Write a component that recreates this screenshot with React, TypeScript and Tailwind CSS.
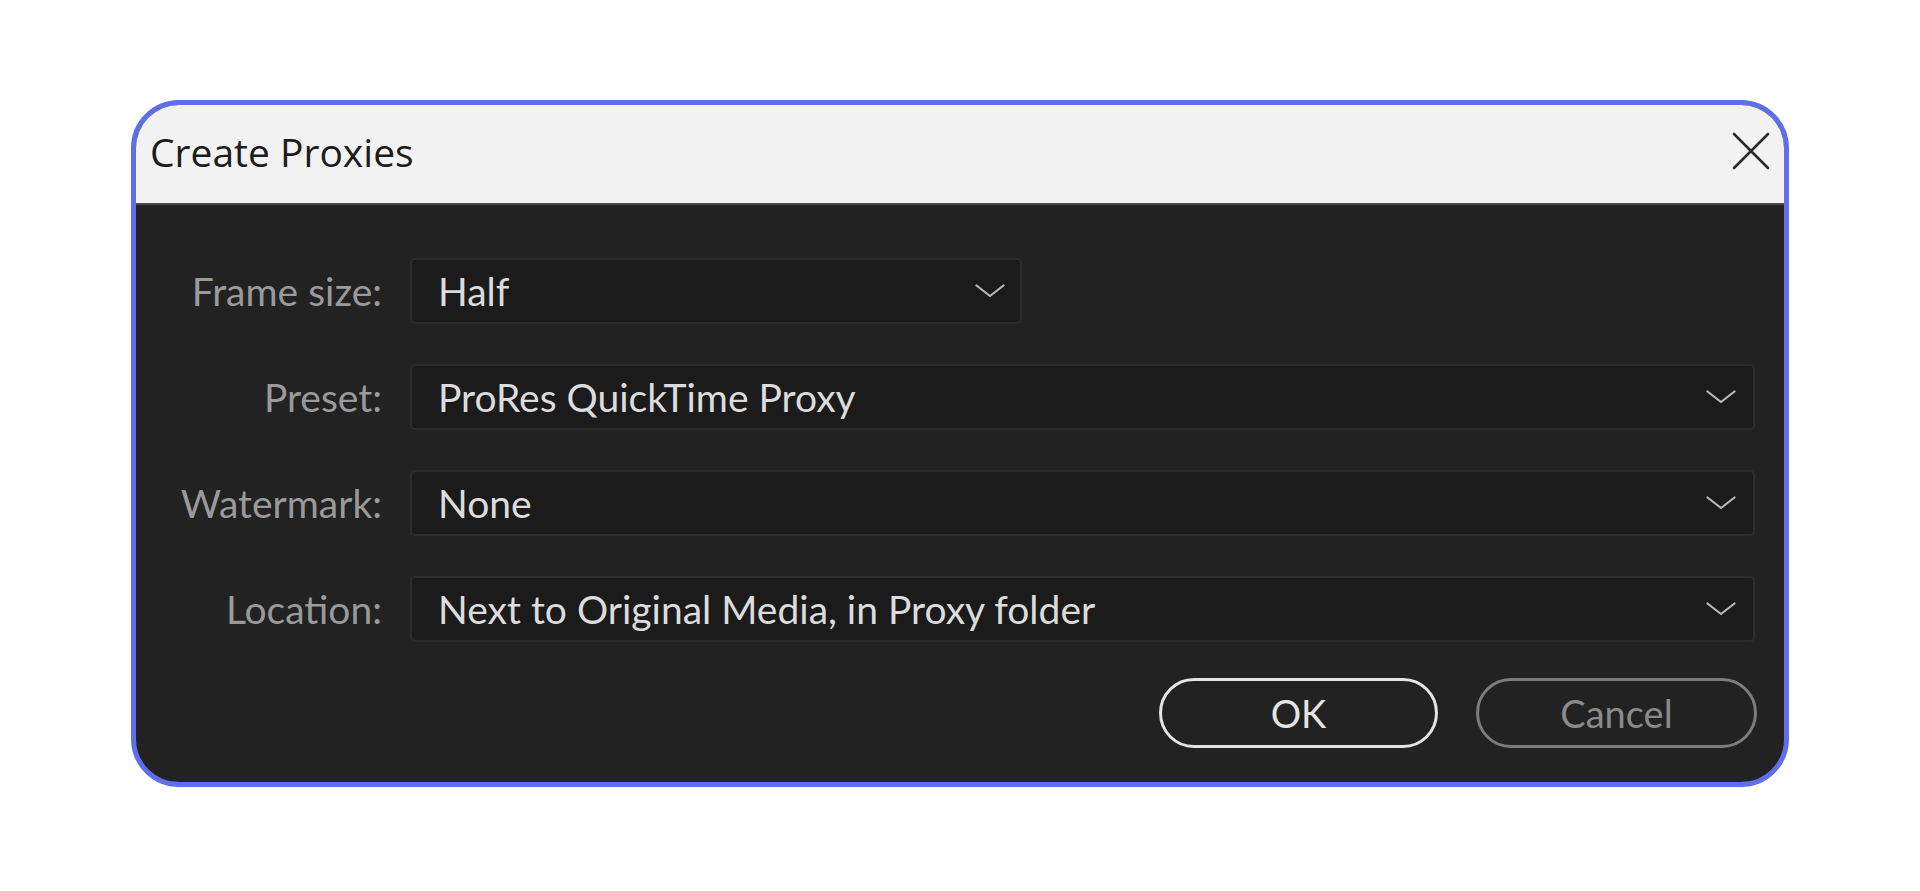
const rows = [
  { label: "Frame size:", value: "Half", narrow: true },
  { label: "Preset:", value: "ProRes QuickTime Proxy", narrow: false },
  { label: "Watermark:", value: "None", narrow: false },
  { label: "Location:", value: "Next to Original Media, in Proxy folder", narrow: false },
];

const Chevron = () => (
  <svg width="30" height="14" viewBox="0 0 30 14" fill="none" className="shrink-0">
    <path d="M1.5 1.5 L15 12 L28.5 1.5" stroke="#b8b8b8" strokeWidth="2.2" strokeLinecap="round" strokeLinejoin="round" />
  </svg>
);

export default function App() {
  return (
    <div className="min-h-screen w-full bg-white flex justify-center pt-[100px] font-['Lato',sans-serif]">
      <div className="w-[1658px] h-[687px] border-[5px] border-[#5f6fec] rounded-[48px] overflow-hidden flex flex-col bg-[#222222]">
        {/* Title bar */}
        <div className="h-[100px] shrink-0 bg-[#f3f2f2] flex items-center justify-between pl-[14px] pr-[13px] border-b-2 border-[#4a4a4a]">
          <span className="text-[39px] text-[#1c1c1c] font-['Open_Sans',sans-serif] leading-none -mt-[6px]">
            Create Proxies
          </span>
          <svg width="40" height="40" viewBox="0 0 40 40" className="-mt-[6px]">
            <path d="M3 3 L37 37 M37 3 L3 37" stroke="#2b2b2b" strokeWidth="2.6" strokeLinecap="round" />
          </svg>
        </div>

        {/* Body */}
        <div className="flex-1 flex flex-col pt-[53px] pr-[29px]">
          <div className="grid grid-cols-[246px_1fr] gap-x-[28px] gap-y-[40px]">
            {rows.map((r) => (
              <div key={r.label} className="contents">
                <div className="h-[66px] flex items-center justify-end text-[39px] text-[#9a9a9a] leading-none">
                  {r.label}
                </div>
                <div
                  className={
                    r.narrow
                      ? "h-[66px] w-[612px] flex items-center justify-between bg-[#1b1b1b] border-2 border-[#2d2d2d] rounded-[5px] pl-[26px] pr-[15px]"
                      : "h-[66px] w-full flex items-center justify-between bg-[#1b1b1b] border-2 border-[#2d2d2d] rounded-[5px] pl-[26px] pr-[17px]"
                  }
                >
                  <span className="text-[39px] text-[#dcdcdc] leading-none whitespace-pre">{r.value}</span>
                  <Chevron />
                </div>
              </div>
            ))}
          </div>

          {/* Buttons */}
          <div className="flex justify-end gap-[38px] mt-[36px] -mr-[2px]">
            <button className="w-[279px] h-[70px] rounded-full border-[3px] border-[#e4e4e4] text-[38px] text-[#e4e4e4] leading-none flex items-center justify-center">
              OK
            </button>
            <button className="w-[281px] h-[70px] rounded-full border-[3px] border-[#7c7c7c] text-[38px] text-[#8a8a8a] leading-none flex items-center justify-center">
              Cancel
            </button>
          </div>
        </div>
      </div>
    </div>
  );
}
